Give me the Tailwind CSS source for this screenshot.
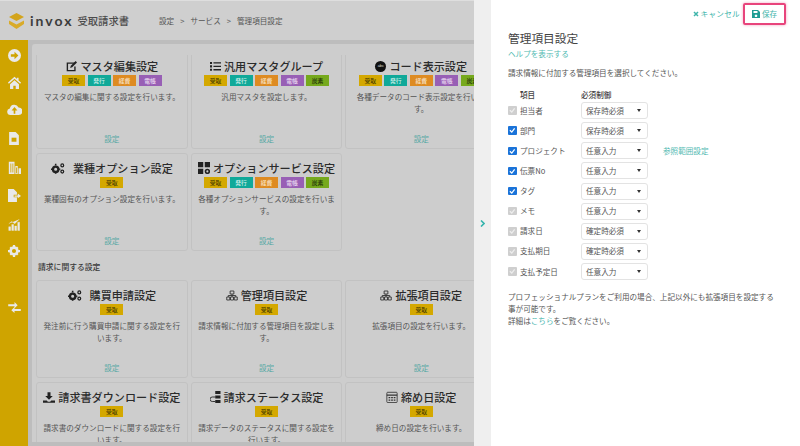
<!DOCTYPE html>
<html lang="ja">
<head>
<meta charset="utf-8">
<script src="https://cdn.jsdelivr.net/npm/@tailwindcss/browser@4"></script>
</head>
<body class="m-0 bg-white">
<div class="flex h-[446px] w-[800px] overflow-hidden bg-white font-['Noto_Sans_CJK_JP',sans-serif] text-[7.6px] leading-[12px] text-[#555]">

  <!-- dimmed left -->
  <div class="flex h-full w-[474px] shrink-0 flex-col bg-[#bdbdbd]">
    <header class="flex h-[40px] shrink-0 items-center border-t border-[#dedede] bg-[#cfcfcf]">
      <svg class="ml-[8px] h-[18px] w-[17px]" viewBox="0 0 17 18"><path d="M8.5 1 16 5 8.500 9 1 5Z" fill="#d3a41c"/><path d="M1 8.500 8.500 12.500 16 8.500V12L8.500 17 1 12Z" fill="#d9ab2a"/></svg>
      <span class="ml-[5px] font-['Lato',sans-serif] text-[14px] leading-none font-bold tracking-[2px] text-[#3c3c3c]">invox</span>
      <span class="ml-[4px] text-[10.300px] font-medium text-[#4c4c4c]">受取請求書</span>
      <nav class="ml-[30px] flex items-center gap-[6px] text-[7.600px] text-[#555]">
        <span>設定</span><span>&gt;</span><span>サービス</span><span>&gt;</span><span>管理項目設定</span>
      </nav>
    </header>
    <div class="flex min-h-0 flex-1">
      <aside class="flex w-[28px] shrink-0 flex-col items-center bg-[#cfa400] pt-[8.500px]">
        <svg class="mb-[14px] h-[13px] w-[13px] shrink-0" viewBox="0 0 16 16"><circle cx="8" cy="8" r="8" fill="#e9e9e9"/><path d="M3.500 6.500H8V3.500L12.800 8 8 12.500V9.500H3.500Z" fill="#cfa400"/></svg>
        <svg class="mb-[15.500px] h-[13px] w-[15px] shrink-0" viewBox="0 0 18 16"><path d="M9 1 1 8l1 1.500L9 3.500l7 6L17 8l-3-2.600V2h-2v1.700Z" fill="#e9e9e9"/><path d="M3.500 10 9 5.300 14.500 10v6H10.500v-4h-3v4h-4Z" fill="#e9e9e9"/></svg>
        <svg class="mb-[15.500px] h-[12px] w-[15px] shrink-0" viewBox="0 0 18 14"><path d="M4 13a4 4 0 0 1-.6-7.900A5.500 5.500 0 0 1 13.800 4 4.500 4.500 0 0 1 14 13Z" fill="#e9e9e9"/><path d="M9 3.500 5.500 7.500H8v4h2v-4h2.500Z" fill="#cfa400"/></svg>
        <svg class="mb-[16px] h-[13px] w-[10px] shrink-0" viewBox="0 0 12 16"><path d="M0 0H8L12 4V16H0Z" fill="#e9e9e9"/><rect x="3" y="7" width="6" height="5" fill="#cfa400"/></svg>
        <svg class="mb-[15px] h-[13px] w-[13px] shrink-0" viewBox="0 0 16 16"><path d="M1 1H8V16H1ZM9 6H12V16H9ZM13 9H16V16H13Z" fill="#e9e9e9"/><path d="M3 3h1v11H3ZM5.500 3h1v11h-1ZM10 8h1v7h-1Z" fill="#cfa400"/></svg>
        <svg class="mb-[16px] h-[13px] w-[13px] shrink-0" viewBox="0 0 16 16"><path d="M0 0H7L11 4V7H7V10H11V16H0ZM8 8H12V5.500L16 8.500 12 11.500V9.500H8Z" fill="#e9e9e9"/></svg>
        <svg class="mb-[14.500px] h-[13px] w-[12px] shrink-0" viewBox="0 0 16 16"><path d="M1 11h2.500v5H1ZM5 8h2.500v8H5ZM9 10h2.500v6H9ZM13 5h2.500v11H13ZM1 7l4-3 4 3 6-6" fill="#e9e9e9" stroke="#e9e9e9" stroke-width=".5"/></svg>
        <svg class="mb-[44.500px] h-[12px] w-[12px] shrink-0" viewBox="0 0 16 16"><circle cx="8" cy="8" r="4.500" fill="none" stroke="#e9e9e9" stroke-width="3.500"/><path d="M6.500 0h3v3h-3ZM6.500 13h3v3h-3ZM0 6.500h3v3H0ZM13 6.500h3v3h-3ZM2 4l2-2 2 2-2 2ZM10 12l2-2 2 2-2 2ZM10 4l2-2 2 2-2 2ZM2 12l2-2 2 2-2 2Z" fill="#e9e9e9"/></svg>
        <svg class="h-[11px] w-[13px] shrink-0" viewBox="0 0 16 14"><path d="M0 3H8V0L12 4 8 8V5.500H0ZM16 9H8V6.500L4 10.500 8 14V11.500H16Z" fill="#e9e9e9"/></svg>
      </aside>
      <main class="mt-[4px] mb-[4px] ml-[4px] min-w-0 flex-1 overflow-hidden rounded-tl-[3px] bg-[#cdcdcd] pt-[11px] pl-[4px]">
        <div class="h-full overflow-hidden">
        <div class="-mt-[4px] grid w-[470px] grid-cols-[151.700px_151.700px_151.700px] gap-x-[3px] gap-y-[4px]">

          <article class="flex h-[98px] flex-col items-center rounded-[3px] border border-[#c2c2c2] pt-[5px] pb-[3px] text-center">
            <h3 class="flex h-[18px] items-center gap-[4px] text-[11.100px] font-medium whitespace-nowrap text-[#2b2b2b]"><svg class="h-[11px] w-[11px]" viewBox="0 0 16 16"><path d="M13 3H2V14H13V8" fill="none" stroke="#222" stroke-width="2"/><path d="M6 10 7 7 14 0 16 2 9 9Z" fill="#222"/></svg>マスタ編集設定</h3>
            <div class="flex gap-[2.500px]"><span class="h-[11px] w-[23px] bg-[#d4a800] text-[5.800px] leading-[11px] font-medium text-[#4c3f00]">受取</span><span class="h-[11px] w-[23px] bg-[#10a999] text-[5.800px] leading-[11px] font-medium text-[#cdeee9]">発行</span><span class="h-[11px] w-[23px] bg-[#de8b22] text-[5.800px] leading-[11px] font-medium text-[#f7e2c5]">経費</span><span class="h-[11px] w-[23px] bg-[#985fb5] text-[5.800px] leading-[11px] font-medium text-[#e6d5ee]">電帳</span></div>
            <p class="mt-[5px]">マスタの編集に関する設定を行います。</p>
            <a class="mt-auto text-[#58a9a5]">設定</a>
          </article>

          <article class="flex h-[98px] flex-col items-center rounded-[3px] border border-[#c2c2c2] pt-[5px] pb-[3px] text-center">
            <h3 class="flex h-[18px] items-center gap-[3px] text-[11.100px] font-medium whitespace-nowrap text-[#2b2b2b]"><svg class="h-[10px] w-[11px]" viewBox="0 0 16 14"><path d="M0 1h3v3H0ZM0 6h3v3H0ZM0 11h3v3H0ZM5 1.500h11v2H5ZM5 6.500h11v2H5ZM5 11.500h11v2H5Z" fill="#222"/></svg>汎用マスタグループ</h3>
            <div class="flex gap-[2.500px]"><span class="h-[11px] w-[23px] bg-[#d4a800] text-[5.800px] leading-[11px] font-medium text-[#4c3f00]">受取</span><span class="h-[11px] w-[23px] bg-[#10a999] text-[5.800px] leading-[11px] font-medium text-[#cdeee9]">発行</span><span class="h-[11px] w-[23px] bg-[#de8b22] text-[5.800px] leading-[11px] font-medium text-[#f7e2c5]">経費</span><span class="h-[11px] w-[23px] bg-[#985fb5] text-[5.800px] leading-[11px] font-medium text-[#e6d5ee]">電帳</span><span class="h-[11px] w-[23px] bg-[#76a91d] text-[5.800px] leading-[11px] font-medium text-[#26380a]">炭素</span></div>
            <p class="mt-[5px]">汎用マスタを設定します。</p>
            <a class="mt-auto text-[#58a9a5]">設定</a>
          </article>

          <article class="flex h-[98px] flex-col items-center rounded-[3px] border border-[#c2c2c2] pt-[5px] pb-[3px] text-center">
            <h3 class="flex h-[18px] items-center gap-[3px] text-[11.100px] font-medium whitespace-nowrap text-[#2b2b2b]"><span class="flex h-[11px] w-[11px] items-center justify-center rounded-full bg-[#111] font-['Liberation_Sans',sans-serif] text-[4px] leading-none text-[#ddd]">abc</span>コード表示設定</h3>
            <div class="flex gap-[2.500px]"><span class="h-[11px] w-[23px] bg-[#d4a800] text-[5.800px] leading-[11px] font-medium text-[#4c3f00]">受取</span><span class="h-[11px] w-[23px] bg-[#10a999] text-[5.800px] leading-[11px] font-medium text-[#cdeee9]">発行</span><span class="h-[11px] w-[23px] bg-[#de8b22] text-[5.800px] leading-[11px] font-medium text-[#f7e2c5]">経費</span><span class="h-[11px] w-[23px] bg-[#985fb5] text-[5.800px] leading-[11px] font-medium text-[#e6d5ee]">電帳</span><span class="h-[11px] w-[23px] bg-[#76a91d] text-[5.800px] leading-[11px] font-medium text-[#26380a]">炭素</span></div>
            <p class="mt-[5px]">各種データのコード表示設定を行いま<br>す。</p>
            <a class="mt-auto text-[#58a9a5]">設定</a>
          </article>

          <article class="flex h-[98px] flex-col items-center rounded-[3px] border border-[#c2c2c2] pt-[5px] pb-[3px] text-center">
            <h3 class="flex h-[18px] items-center gap-[8px] text-[11.100px] font-medium whitespace-nowrap text-[#2b2b2b]"><svg class="h-[11px] w-[14px]" viewBox="0 0 18 14"><circle cx="6" cy="8" r="3.500" fill="none" stroke="#222" stroke-width="3"/><circle cx="14.500" cy="3" r="1.800" fill="none" stroke="#222" stroke-width="1.600"/><circle cx="14.500" cy="11" r="1.800" fill="none" stroke="#222" stroke-width="1.600"/><path d="M5 1h2v2H5ZM5 13h2v1H5ZM0 7h1.500v2H0ZM10.500 7H12v2h-1.500Z" fill="#222"/></svg>業種オプション設定</h3>
            <div class="flex gap-[2.500px]"><span class="h-[11px] w-[23px] bg-[#d4a800] text-[5.800px] leading-[11px] font-medium text-[#4c3f00]">受取</span></div>
            <p class="mt-[5px]">業種固有のオプション設定を行います。</p>
            <a class="mt-auto text-[#58a9a5]">設定</a>
          </article>

          <article class="flex h-[98px] flex-col items-center rounded-[3px] border border-[#c2c2c2] pt-[5px] pb-[3px] text-center">
            <h3 class="flex h-[18px] items-center gap-[3px] text-[11.100px] font-medium whitespace-nowrap text-[#2b2b2b]"><svg class="h-[12px] w-[12px]" viewBox="0 0 16 16"><path d="M0 0h7v7H0ZM9 0h7v7H9ZM0 9h7v7H0Z" fill="#222"/><circle cx="12.500" cy="12.500" r="2.500" fill="none" stroke="#222" stroke-width="2.200"/></svg>オプションサービス設定</h3>
            <div class="flex gap-[2.500px]"><span class="h-[11px] w-[23px] bg-[#d4a800] text-[5.800px] leading-[11px] font-medium text-[#4c3f00]">受取</span><span class="h-[11px] w-[23px] bg-[#10a999] text-[5.800px] leading-[11px] font-medium text-[#cdeee9]">発行</span><span class="h-[11px] w-[23px] bg-[#de8b22] text-[5.800px] leading-[11px] font-medium text-[#f7e2c5]">経費</span><span class="h-[11px] w-[23px] bg-[#985fb5] text-[5.800px] leading-[11px] font-medium text-[#e6d5ee]">電帳</span><span class="h-[11px] w-[23px] bg-[#76a91d] text-[5.800px] leading-[11px] font-medium text-[#26380a]">炭素</span></div>
            <p class="mt-[5px]">各種オプションサービスの設定を行いま<br>す。</p>
            <a class="mt-auto text-[#58a9a5]">設定</a>
          </article>

          <div></div>

          <h2 class="col-span-3 -mb-[4px] flex h-[25px] items-start pt-[6px] pl-[2px] text-[7.800px] leading-[12px] font-medium text-[#3a3a3a]">請求に関する設定</h2>

          <article class="flex h-[98px] flex-col items-center rounded-[3px] border border-[#c2c2c2] pt-[5px] pb-[3px] text-center">
            <h3 class="flex h-[18px] items-center gap-[8px] text-[11.100px] font-medium whitespace-nowrap text-[#2b2b2b]"><svg class="h-[11px] w-[14px]" viewBox="0 0 18 14"><circle cx="6" cy="8" r="3.500" fill="none" stroke="#222" stroke-width="3"/><circle cx="14.500" cy="3" r="1.800" fill="none" stroke="#222" stroke-width="1.600"/><circle cx="14.500" cy="11" r="1.800" fill="none" stroke="#222" stroke-width="1.600"/><path d="M5 1h2v2H5ZM5 13h2v1H5ZM0 7h1.500v2H0ZM10.500 7H12v2h-1.500Z" fill="#222"/></svg>購買申請設定</h3>
            <div class="flex gap-[2.500px]"><span class="h-[11px] w-[23px] bg-[#d4a800] text-[5.800px] leading-[11px] font-medium text-[#4c3f00]">受取</span></div>
            <p class="mt-[5px]">発注前に行う購買申請に関する設定を行<br>います。</p>
            <a class="mt-auto text-[#58a9a5]">設定</a>
          </article>

          <article class="flex h-[98px] flex-col items-center rounded-[3px] border border-[#c2c2c2] pt-[5px] pb-[3px] text-center">
            <h3 class="flex h-[18px] items-center gap-[3px] text-[11.100px] font-medium whitespace-nowrap text-[#2b2b2b]"><svg class="h-[11px] w-[12px]" viewBox="0 0 16 14"><path d="M5.500 1h5v4h-5ZM1 9h4v4H1ZM6 9h4v4H6ZM11 9h4v4h-4ZM3 9V7h10v2M8 5v4" fill="none" stroke="#333" stroke-width="1.200"/></svg>管理項目設定</h3>
            <div class="flex gap-[2.500px]"><span class="h-[11px] w-[23px] bg-[#d4a800] text-[5.800px] leading-[11px] font-medium text-[#4c3f00]">受取</span></div>
            <p class="mt-[5px]">請求情報に付加する管理項目を設定しま<br>す。</p>
            <a class="mt-auto text-[#58a9a5]">設定</a>
          </article>

          <article class="flex h-[98px] flex-col items-center rounded-[3px] border border-[#c2c2c2] pt-[5px] pb-[3px] text-center">
            <h3 class="flex h-[18px] items-center gap-[3px] text-[11.100px] font-medium whitespace-nowrap text-[#2b2b2b]"><svg class="h-[11px] w-[12px]" viewBox="0 0 16 14"><path d="M5.500 1h5v4h-5ZM1 9h4v4H1ZM6 9h4v4H6ZM11 9h4v4h-4ZM3 9V7h10v2M8 5v4" fill="none" stroke="#333" stroke-width="1.200"/></svg>拡張項目設定</h3>
            <div class="flex gap-[2.500px]"><span class="h-[11px] w-[23px] bg-[#d4a800] text-[5.800px] leading-[11px] font-medium text-[#4c3f00]">受取</span></div>
            <p class="mt-[5px]">拡張項目の設定を行います。</p>
            <a class="mt-auto text-[#58a9a5]">設定</a>
          </article>

          <article class="flex h-[98px] flex-col items-center rounded-[3px] border border-[#c2c2c2] pt-[5px] pb-[3px] text-center">
            <h3 class="flex h-[18px] items-center gap-[3px] text-[11.100px] font-medium whitespace-nowrap text-[#2b2b2b]"><svg class="h-[11px] w-[12px]" viewBox="0 0 16 14"><path d="M6 0h4v5h3L8 10 3 5h3ZM0 11h5l1.500 1.500h3L11 11h5v3H0Z" fill="#222"/></svg>請求書ダウンロード設定</h3>
            <div class="flex gap-[2.500px]"><span class="h-[11px] w-[23px] bg-[#d4a800] text-[5.800px] leading-[11px] font-medium text-[#4c3f00]">受取</span></div>
            <p class="mt-[5px]">請求書のダウンロードに関する設定を行<br>います。</p>
            <a class="mt-auto text-[#58a9a5]">設定</a>
          </article>

          <article class="flex h-[98px] flex-col items-center rounded-[3px] border border-[#c2c2c2] pt-[5px] pb-[3px] text-center">
            <h3 class="flex h-[18px] items-center gap-[2px] text-[11.100px] font-medium whitespace-nowrap text-[#2b2b2b]"><svg class="h-[12px] w-[12px]" viewBox="0 0 16 16"><path d="M7 0h7v4H7ZM7 6h7v4H7ZM7 12h7v4H7Z" fill="#222"/><path d="M7 8H3a2 2 0 0 0 0 6h4" fill="none" stroke="#222" stroke-width="1.200"/></svg>請求ステータス設定</h3>
            <div class="flex gap-[2.500px]"><span class="h-[11px] w-[23px] bg-[#d4a800] text-[5.800px] leading-[11px] font-medium text-[#4c3f00]">受取</span></div>
            <p class="mt-[5px]">請求データのステータスに関する設定を<br>行います。</p>
            <a class="mt-auto text-[#58a9a5]">設定</a>
          </article>

          <article class="flex h-[98px] flex-col items-center rounded-[3px] border border-[#c2c2c2] pt-[5px] pb-[3px] text-center">
            <h3 class="flex h-[18px] items-center gap-[3px] text-[11.100px] font-medium whitespace-nowrap text-[#2b2b2b]"><svg class="h-[12px] w-[12px]" viewBox="0 0 14 14"><rect x="1" y="1.500" width="12" height="12" rx="1" fill="none" stroke="#333"/><path d="M1 4h12v1.500H1ZM3 7h2v1.500H3ZM6 7h2v1.500H6ZM9 7h2v1.500H9ZM3 10h2v1.500H3ZM6 10h2v1.500H6ZM9 10h2v1.500H9Z" fill="#333"/></svg>締め日設定</h3>
            <div class="flex gap-[2.500px]"><span class="h-[11px] w-[23px] bg-[#d4a800] text-[5.800px] leading-[11px] font-medium text-[#4c3f00]">受取</span></div>
            <p class="mt-[5px]">締め日の設定を行います。</p>
            <a class="mt-auto text-[#58a9a5]">設定</a>
          </article>

        </div>
        </div>
      </main>
    </div>
  </div>

  <!-- collapse strip -->
  <div class="flex w-[17px] shrink-0 items-center justify-center bg-[#efefef]">
    <svg class="h-[7px] w-[5px]" viewBox="0 0 5 7"><path d="M1 .5 4 3.500 1 6.500" fill="none" stroke="#35b4ad" stroke-width="1.600"/></svg>
  </div>

  <!-- right panel -->
  <section class="min-w-0 flex-1 pl-[17px] text-[#555]">
    <div class="flex h-[25px] items-start justify-end pt-[3px] pr-[14px]">
      <a class="mt-[2px] flex h-[18px] items-center gap-[2px] text-[#3fb5ab]"><svg class="h-[6px] w-[6px]" viewBox="0 0 6 6"><path d="M1 1 5 5M5 1 1 5" stroke="#3fb5ab" stroke-width="1.500"/></svg><span class="tracking-[.3px]">キャンセル</span></a>
      <a class="ml-[3px] flex h-[22px] w-[43px] items-center justify-center gap-[2px] rounded-[2px] border-2 border-[#e8447c] text-[#3fb5ab] shadow-[0_0_3px_rgba(232,68,124,.5)]"><svg class="h-[8px] w-[8px]" viewBox="0 0 8 8"><path d="M0 0H6L8 2V8H0ZM1.500 1V3H5.500V1ZM4 4.500a1.300 1.300 0 1 0 .01 0Z" fill="#1f9c94" fill-rule="evenodd"/></svg>保存</a>
    </div>
    <h1 class="mt-[4px] text-[11.700px] leading-[18px] font-normal text-[#444]">管理項目設定</h1>
    <a class="mt-[1px] block text-[#50b9b1]">ヘルプを表示する</a>
    <p class="mt-[7px]">請求情報に付加する管理項目を選択してください。</p>

    <div class="mt-[10px] flex h-[12px] font-medium text-[#444]">
      <span class="ml-[12px] w-[61px]">項目</span><span>必須制御</span>
    </div>
    <div class="mt-[1px] flex flex-col gap-[3.150px]">
      <div class="flex h-[17px] items-center"><span class="h-[8.500px] w-[8.500px] rounded-[1px] bg-[#cfcfcf] text-center"><svg class="h-[8.500px] w-[8.500px]" viewBox="0 0 9 9"><path d="M2 4.500 4 6.500 7 2.500" fill="none" stroke="#eee" stroke-width="1.300"/></svg></span><span class="ml-[3.500px] w-[61px]">担当者</span><span class="flex h-[17px] w-[67px] items-center justify-between rounded-[3px] border border-[#e3e3e3] px-[4px]"><span>保存時必須</span><i class="mr-[2px] h-0 w-0 border-x-[2.500px] border-t-[3px] border-x-transparent border-t-[#333]"></i></span></div>
      <div class="flex h-[17px] items-center"><span class="h-[8.500px] w-[8.500px] rounded-[1px] bg-[#1a73d9] text-center"><svg class="h-[8.500px] w-[8.500px]" viewBox="0 0 9 9"><path d="M2 4.500 4 6.500 7 2.500" fill="none" stroke="#fff" stroke-width="1.300"/></svg></span><span class="ml-[3.500px] w-[61px]">部門</span><span class="flex h-[17px] w-[67px] items-center justify-between rounded-[3px] border border-[#e3e3e3] px-[4px]"><span>保存時必須</span><i class="mr-[2px] h-0 w-0 border-x-[2.500px] border-t-[3px] border-x-transparent border-t-[#333]"></i></span></div>
      <div class="flex h-[17px] items-center"><span class="h-[8.500px] w-[8.500px] rounded-[1px] bg-[#1a73d9] text-center"><svg class="h-[8.500px] w-[8.500px]" viewBox="0 0 9 9"><path d="M2 4.500 4 6.500 7 2.500" fill="none" stroke="#fff" stroke-width="1.300"/></svg></span><span class="ml-[3.500px] w-[61px]">プロジェクト</span><span class="flex h-[17px] w-[67px] items-center justify-between rounded-[3px] border border-[#e3e3e3] px-[4px]"><span>任意入力</span><i class="mr-[2px] h-0 w-0 border-x-[2.500px] border-t-[3px] border-x-transparent border-t-[#333]"></i></span><a class="ml-[15px] text-[#50b9b1]">参照範囲設定</a></div>
      <div class="flex h-[17px] items-center"><span class="h-[8.500px] w-[8.500px] rounded-[1px] bg-[#1a73d9] text-center"><svg class="h-[8.500px] w-[8.500px]" viewBox="0 0 9 9"><path d="M2 4.500 4 6.500 7 2.500" fill="none" stroke="#fff" stroke-width="1.300"/></svg></span><span class="ml-[3.500px] w-[61px]">伝票No</span><span class="flex h-[17px] w-[67px] items-center justify-between rounded-[3px] border border-[#e3e3e3] px-[4px]"><span>任意入力</span><i class="mr-[2px] h-0 w-0 border-x-[2.500px] border-t-[3px] border-x-transparent border-t-[#333]"></i></span></div>
      <div class="flex h-[17px] items-center"><span class="h-[8.500px] w-[8.500px] rounded-[1px] bg-[#1a73d9] text-center"><svg class="h-[8.500px] w-[8.500px]" viewBox="0 0 9 9"><path d="M2 4.500 4 6.500 7 2.500" fill="none" stroke="#fff" stroke-width="1.300"/></svg></span><span class="ml-[3.500px] w-[61px]">タグ</span><span class="flex h-[17px] w-[67px] items-center justify-between rounded-[3px] border border-[#e3e3e3] px-[4px]"><span>任意入力</span><i class="mr-[2px] h-0 w-0 border-x-[2.500px] border-t-[3px] border-x-transparent border-t-[#333]"></i></span></div>
      <div class="flex h-[17px] items-center"><span class="h-[8.500px] w-[8.500px] rounded-[1px] bg-[#cfcfcf] text-center"><svg class="h-[8.500px] w-[8.500px]" viewBox="0 0 9 9"><path d="M2 4.500 4 6.500 7 2.500" fill="none" stroke="#eee" stroke-width="1.300"/></svg></span><span class="ml-[3.500px] w-[61px]">メモ</span><span class="flex h-[17px] w-[67px] items-center justify-between rounded-[3px] border border-[#e3e3e3] px-[4px]"><span>任意入力</span><i class="mr-[2px] h-0 w-0 border-x-[2.500px] border-t-[3px] border-x-transparent border-t-[#333]"></i></span></div>
      <div class="flex h-[17px] items-center"><span class="h-[8.500px] w-[8.500px] rounded-[1px] bg-[#cfcfcf] text-center"><svg class="h-[8.500px] w-[8.500px]" viewBox="0 0 9 9"><path d="M2 4.500 4 6.500 7 2.500" fill="none" stroke="#eee" stroke-width="1.300"/></svg></span><span class="ml-[3.500px] w-[61px]">請求日</span><span class="flex h-[17px] w-[67px] items-center justify-between rounded-[3px] border border-[#e3e3e3] px-[4px]"><span>確定時必須</span><i class="mr-[2px] h-0 w-0 border-x-[2.500px] border-t-[3px] border-x-transparent border-t-[#333]"></i></span></div>
      <div class="flex h-[17px] items-center"><span class="h-[8.500px] w-[8.500px] rounded-[1px] bg-[#cfcfcf] text-center"><svg class="h-[8.500px] w-[8.500px]" viewBox="0 0 9 9"><path d="M2 4.500 4 6.500 7 2.500" fill="none" stroke="#eee" stroke-width="1.300"/></svg></span><span class="ml-[3.500px] w-[61px]">支払期日</span><span class="flex h-[17px] w-[67px] items-center justify-between rounded-[3px] border border-[#e3e3e3] px-[4px]"><span>確定時必須</span><i class="mr-[2px] h-0 w-0 border-x-[2.500px] border-t-[3px] border-x-transparent border-t-[#333]"></i></span></div>
      <div class="flex h-[17px] items-center"><span class="h-[8.500px] w-[8.500px] rounded-[1px] bg-[#cfcfcf] text-center"><svg class="h-[8.500px] w-[8.500px]" viewBox="0 0 9 9"><path d="M2 4.500 4 6.500 7 2.500" fill="none" stroke="#eee" stroke-width="1.300"/></svg></span><span class="ml-[3.500px] w-[61px]">支払予定日</span><span class="flex h-[17px] w-[67px] items-center justify-between rounded-[3px] border border-[#e3e3e3] px-[4px]"><span>任意入力</span><i class="mr-[2px] h-0 w-0 border-x-[2.500px] border-t-[3px] border-x-transparent border-t-[#333]"></i></span></div>
    </div>
    <p class="mt-[11px]">プロフェッショナルプランをご利用の場合、上記以外にも拡張項目を設定する<br>事が可能です。<br>詳細は<a class="text-[#50b9b1]">こちら</a>をご覧ください。</p>
  </section>
</div>
</body>
</html>
